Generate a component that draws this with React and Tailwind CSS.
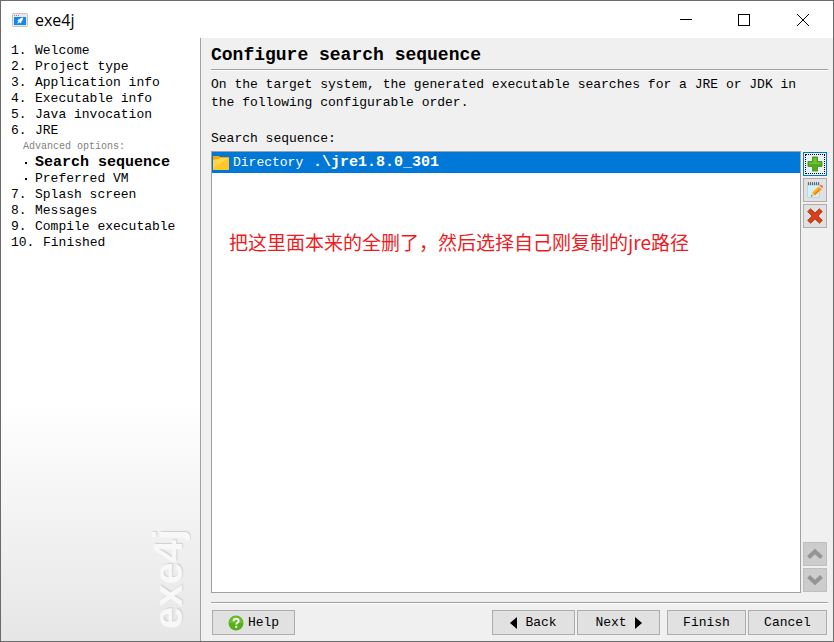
import { useState } from 'react'

const steps = [
  { num: '1.', label: 'Welcome' },
  { num: '2.', label: 'Project type' },
  { num: '3.', label: 'Application info' },
  { num: '4.', label: 'Executable info' },
  { num: '5.', label: 'Java invocation' },
  { num: '6.', label: 'JRE', options: ['Search sequence', 'Preferred VM'] },
  { num: '7.', label: 'Splash screen' },
  { num: '8.', label: 'Messages' },
  { num: '9.', label: 'Compile executable' },
  { num: '10.', label: 'Finished' },
]

function AppIcon() {
  return (
    <svg width="16" height="14" viewBox="0 0 16 14" aria-hidden="true">
      <rect x="0.5" y="0.5" width="15" height="13" rx="1" fill="#e9e9e9" stroke="#c4c4c4" />
      <path d="M2 2h1v1H2zM4 2h1v1H4zM6 2h1v1H6z" fill="#f0654a" />
      <rect x="2" y="4" width="12" height="8" fill="#1487f5" />
      <path d="M11 4.500c-1.600.1-2.700.7-3.400 1.800l-1.300.3-.9 1.100 1.200.1-1.400 2.900 2.900-1.500.3 1.300 1-1.100.2-1.200c1-.8 1.400-2 1.400-3.700z" fill="#fff" />
    </svg>
  )
}

function FolderIcon() {
  return (
    <svg width="16" height="14" viewBox="0 0 16 14" aria-hidden="true">
      <path d="M0 0h6l1 1h9v13H0z" fill="#f9a602" />
      <path d="M0 4l6-1 1-1h9v12H0z" fill="#ffc726" />
      <path d="M0 4l6-1 1-1h9L0 12z" fill="#ffd54d" />
    </svg>
  )
}

function PlusIcon() {
  return (
    <svg width="16" height="16" viewBox="0 0 16 16" aria-hidden="true">
      <path d="M5.500 1h5v4.500H15v5h-4.500V15h-5v-4.500H1v-5h4.500z" fill="#55a91c" stroke="#3e8e12" strokeWidth="0.8" />
      <path d="M6.500 2h3v4.500H14V8H2V6.500h4.500z" fill="#71c22f" />
    </svg>
  )
}

function EditIcon() {
  return (
    <svg width="16" height="16" viewBox="0 0 16 16" aria-hidden="true">
      <path d="M.5 1.500h12v14H.5z" fill="#d4effa" stroke="#a9cbd9" strokeWidth="0.6" />
      <path d="M.5 1.500h12v2H.5z" fill="#b6c6cd" />
      <path d="M1.500 0v3M3.500 0v3M5.500 0v3M7.500 0v3M9.500 0v3M11.500 0v3" stroke="#54636b" strokeWidth="0.9" />
      <path d="M4 14.500l1-4 3 2.800z" fill="#f4d2a0" />
      <path d="M4 14.500l.4-1.600 1.200 1.100z" fill="#444" />
      <path d="M5 10.500l6.500-6 3 2.800L8 13.300z" fill="#fdb813" />
      <path d="M6.500 11.900L13 5.900l1.500 1.400L8 13.300z" fill="#ee8c0c" />
      <path d="M11.500 4.500l1-1 3 2.800-1 1z" fill="#d8d8d8" />
      <path d="M12.500 3.500l.8-.6c1.400-.5 2.900.9 2.600 2.400l-.4 1z" fill="#ee6a55" />
    </svg>
  )
}

function DeleteIcon() {
  return (
    <svg width="16" height="16" viewBox="0 0 16 16" aria-hidden="true">
      <path
        d="M3.500.7L8 5l4.300-4.200 3 2.700L11 8l4.300 4.300-2.700 3L8 11l-4.300 4.300-3-2.800L5 8 .7 3.600z"
        fill="#d6401a"
        stroke="#b02c0c"
        strokeWidth="0.8"
      />
    </svg>
  )
}

function ChevronIcon({ down }) {
  return (
    <svg width="18" height="14" viewBox="0 0 18 14" aria-hidden="true">
      <path d={down ? 'M2.500 3.500L9 9.500l6.500-6' : 'M2.500 10.500L9 4.500l6.500 6'} fill="none" stroke="#949494" strokeWidth="4" />
    </svg>
  )
}

function HelpIcon() {
  return (
    <svg width="16" height="16" viewBox="0 0 16 16" aria-hidden="true">
      <circle cx="8" cy="8" r="7.500" fill="#55b01b" />
      <path d="M1 8a7 7 0 0 1 14 0z" fill="#69be2b" />
      <path d="M5.500 6.200c0-3.300 5.200-3.200 5.200-.2 0 1.800-2.500 1.700-2.500 3.500" fill="none" stroke="#fff" strokeWidth="1.900" />
      <rect x="7.200" y="10.800" width="2" height="2" fill="#fff" />
    </svg>
  )
}

function Arrow({ right }) {
  return (
    <svg width="7" height="12" viewBox="0 0 7 12" aria-hidden="true">
      <path d={right ? 'M0 0l7 6-7 6z' : 'M7 0L0 6l7 6z'} fill="#000" />
    </svg>
  )
}

function Rule() {
  return <div className="h-[2px] shrink-0 border-t border-[#a0a0a0] bg-white" />
}

function ToolButton({ label, focused, disabled, children }) {
  let look = 'border border-[#adadad] bg-[#e1e1e1]'
  if (focused) look = 'border border-[#0078d7] bg-[#e5f1fb] outline outline-1 -outline-offset-3 outline-dotted outline-black'
  if (disabled) look = 'border border-[#bfbfbf] bg-[#cccccc]'
  return (
    <button type="button" aria-label={label} disabled={disabled} className={`flex h-6 w-6 items-center justify-center ${look}`}>
      {children}
    </button>
  )
}

function WizardButton({ className, children }) {
  return (
    <button type="button" className={`flex h-[25px] items-center justify-center border border-[#adadad] bg-[#e1e1e1] ${className}`}>
      {children}
    </button>
  )
}

function Sidebar() {
  return (
    <nav className="flex w-[200px] shrink-0 flex-col border-r border-[#a0a0a0] bg-linear-to-b from-white from-60% to-[#e6e6e6] pt-[5px]">
      <ol className="pl-[10px]">
        {steps.map((step) => (
          <li key={step.num}>
            <a href="#" className="flex">
              <span className={step.num.length > 2 ? 'w-8' : 'w-6'}>{step.num}</span>
              {step.label}
            </a>
            {step.options && (
              <div className="pl-3">
                <p className="text-[10px] leading-4 text-[#808080]">Advanced options:</p>
                <ul>
                  {step.options.map((option, i) => (
                    <li key={option} className="flex items-center">
                      <span className="mr-2 ml-[2px] h-[2px] w-[2px] bg-black" />
                      <a href="#" className={i === 0 ? 'text-[15px] leading-4 font-bold' : ''}>{option}</a>
                    </li>
                  ))}
                </ul>
              </div>
            )}
          </li>
        ))}
      </ol>
      <div
        aria-hidden="true"
        className="mt-auto mr-3 mb-3 rotate-180 self-end font-['Liberation_Sans'] text-[40px] leading-10 font-bold text-[#f8f8f8] [text-shadow:1px_1px_1px_#cfcfcf] [writing-mode:vertical-rl]"
      >
        exe4j
      </div>
    </nav>
  )
}

export default function App() {
  const [selected, setSelected] = useState(true)

  return (
    <div className="flex h-screen flex-col border border-[#6b6b6b] bg-[#f0f0f0] font-['Liberation_Mono',monospace] text-[13px] leading-4 text-black">
      <header className="flex h-[37px] shrink-0 items-center bg-white pl-[11px]">
        <AppIcon />
        <h1 className="ml-[7px] font-['Open_Sans',sans-serif] text-base">exe4j</h1>
        <div className="ml-auto flex self-stretch">
          <button type="button" aria-label="Minimize" className="flex w-[58px] items-center justify-center">
            <span className="w-3 border-t border-black" />
          </button>
          <button type="button" aria-label="Maximize" className="flex w-[58px] items-center justify-center">
            <span className="h-3 w-3 border border-black" />
          </button>
          <button type="button" aria-label="Close" className="flex w-[60px] items-center justify-center">
            <svg width="12" height="12" viewBox="0 0 12 12" aria-hidden="true">
              <path d="M0 0l12 12M12 0L0 12" stroke="#000" />
            </svg>
          </button>
        </div>
      </header>

      <div className="flex min-h-0 flex-1">
        <Sidebar />

        <main className="flex min-w-0 flex-1 flex-col pr-[5px] pb-[6px] pl-[10px]">
          <h2 className="pt-[5px] pb-[2px] text-[18px] leading-6 font-bold">Configure search sequence</h2>
          <Rule />
          <p className="pt-[5px] pr-4 leading-[18px]">
            On the target system, the generated executable searches for a JRE or JDK in the following configurable order.
          </p>
          <p id="sequence-label" className="pt-[18px] pb-[3px] leading-[18px]">Search sequence:</p>

          <div className="flex min-h-0 flex-1 gap-[2px] pr-px">
            <div className="relative min-w-0 flex-1 border border-[#a0a0a0] bg-white">
              <ul role="listbox" aria-labelledby="sequence-label">
                <li
                  role="option"
                  aria-selected={selected}
                  onClick={() => setSelected(true)}
                  className={`flex h-[21px] items-center pl-px ${selected ? 'bg-[#0078d7] text-white' : ''}`}
                >
                  <FolderIcon />
                  <span className="ml-1 w-20">Directory</span>
                  <b className="text-[15px]">.\jre1.8.0_301</b>
                </li>
              </ul>
              <p className="absolute top-[76px] left-[17px] font-['Noto_Sans_CJK_SC',sans-serif] text-[19px] leading-7 whitespace-nowrap text-[#ed1c24]">
                把这里面本来的全删了，然后选择自己刚复制的jre路径
              </p>
            </div>
            <div className="flex flex-col gap-[2px] py-px">
              <ToolButton label="Add" focused><PlusIcon /></ToolButton>
              <ToolButton label="Edit"><EditIcon /></ToolButton>
              <ToolButton label="Remove"><DeleteIcon /></ToolButton>
              <div className="flex-1" />
              <ToolButton label="Move up" disabled><ChevronIcon /></ToolButton>
              <ToolButton label="Move down" disabled><ChevronIcon down /></ToolButton>
            </div>
          </div>

          <div className="pt-[9px] pb-[6px]">
            <Rule />
          </div>
          <footer className="flex gap-[2px] px-px">
            <WizardButton className="mr-auto w-[83px] gap-1"><HelpIcon />Help</WizardButton>
            <WizardButton className="w-[83px] gap-2"><Arrow />Back</WizardButton>
            <WizardButton className="mr-[5px] w-[83px] gap-2">Next<Arrow right /></WizardButton>
            <WizardButton className="w-[79px]">Finish</WizardButton>
            <WizardButton className="w-[79px]">Cancel</WizardButton>
          </footer>
        </main>
      </div>
    </div>
  )
}
